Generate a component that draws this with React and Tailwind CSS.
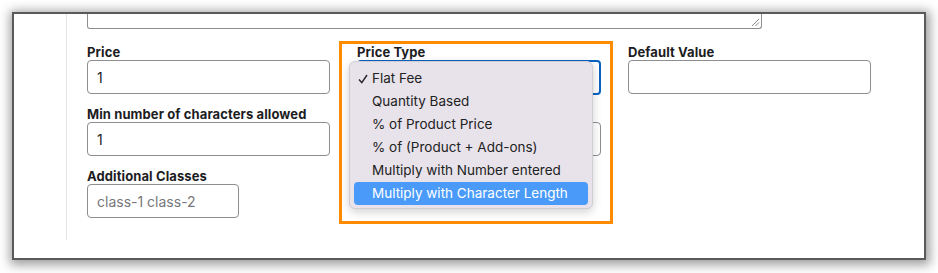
import React from "react";

const font = { fontFamily: "Inter, 'Noto Sans', sans-serif" };

function Label({ children }) {
  return (
    <div className="h-[16px] text-[13px] leading-[16px] font-bold text-[#1d1d1f] tracking-[0.1px]">
      {children}
    </div>
  );
}

function Input({ value, placeholder, className = "" }) {
  return (
    <div
      className={`h-[34px] border border-[#8d8d92] rounded-[4px] bg-white flex items-center px-[9px] text-[14px] ${className}`}
    >
      {value ? (
        <span className="text-[#1d1d1f]">{value}</span>
      ) : placeholder ? (
        <span className="text-[#77777b]">{placeholder}</span>
      ) : null}
    </div>
  );
}

const items = [
  "Flat Fee",
  "Quantity Based",
  "% of Product Price",
  "% of (Product + Add-ons)",
  "Multiply with Number entered",
  "Multiply with Character Length",
];

export default function App() {
  return (
    <div className="relative w-[938px] h-[273px] bg-white overflow-hidden" style={font}>
      <div className="ml-[14px] mt-[14px] w-[910px] h-[244px] bg-white shadow-[0_0_0_2px_#5a5a5a,1px_2px_10px_5px_rgba(0,0,0,0.38)] flex">
        <div className="w-[53px] h-[226px] border-r border-[#e4e4e4] shrink-0" />
        <div className="pl-[20px]">
          <div className="relative w-[675px] h-[15px] border border-t-0 border-[#8d8d92] rounded-b-[3px]">
            <svg className="absolute right-[1px] bottom-[1px]" width="9" height="9" viewBox="0 0 9 9">
              <line x1="1" y1="8" x2="8" y2="1" stroke="#6b6b6b" strokeWidth="0.8" />
              <line x1="4.5" y1="8" x2="8" y2="4.5" stroke="#6b6b6b" strokeWidth="0.8" />
            </svg>
          </div>
          <div className="mt-[15px] grid grid-cols-[243px_244px_243px] gap-x-[27px] gap-y-[12px]">
            <div>
              <Label>Price</Label>
              <Input value="1" />
            </div>
            <div>
              <Label>Price Type</Label>
              <div className="h-[35px] -mb-px border-2 border-[#0b63c1] rounded-[4px] bg-white" />
            </div>
            <div>
              <Label>Default Value</Label>
              <Input />
            </div>
            <div>
              <Label>Min number of characters allowed</Label>
              <Input value="1" />
            </div>
            <div>
              <Label>&nbsp;</Label>
              <Input />
            </div>
            <div />
            <div>
              <Label>Additional Classes</Label>
              <Input placeholder="class-1 class-2" className="w-[152px]" />
            </div>
          </div>
        </div>
      </div>

      {/* annotation box */}
      <div className="absolute left-[339px] top-[41px] w-[274px] h-[183px] border-[3px] border-[#ff8c00]" />

      {/* dropdown menu */}
      <div className="absolute left-[349px] top-[61px] w-[244px] h-[148px] bg-[#e8e2eb] border border-[#d2ccd5] rounded-[6px] shadow-[0_3px_10px_rgba(0,0,0,0.18)] px-[4px] pt-[5px]">
        {items.map((it, i) => {
          const active = i === items.length - 1;
          return (
            <div
              key={it}
              className={`relative h-[23px] flex items-center pl-[18px] text-[13.5px] rounded-[4px] ${
                active ? "bg-[#4a9bf9] text-white" : "text-[#222]"
              }`}
            >
              {i === 0 && (
                <svg className="absolute left-[4px] top-[7px]" width="10" height="10" viewBox="0 0 10 10">
                  <polyline points="1,5.5 3.8,8.6 9,1" fill="none" stroke="#222" strokeWidth="1.4" />
                </svg>
              )}
              {it}
            </div>
          );
        })}
      </div>
    </div>
  );
}
